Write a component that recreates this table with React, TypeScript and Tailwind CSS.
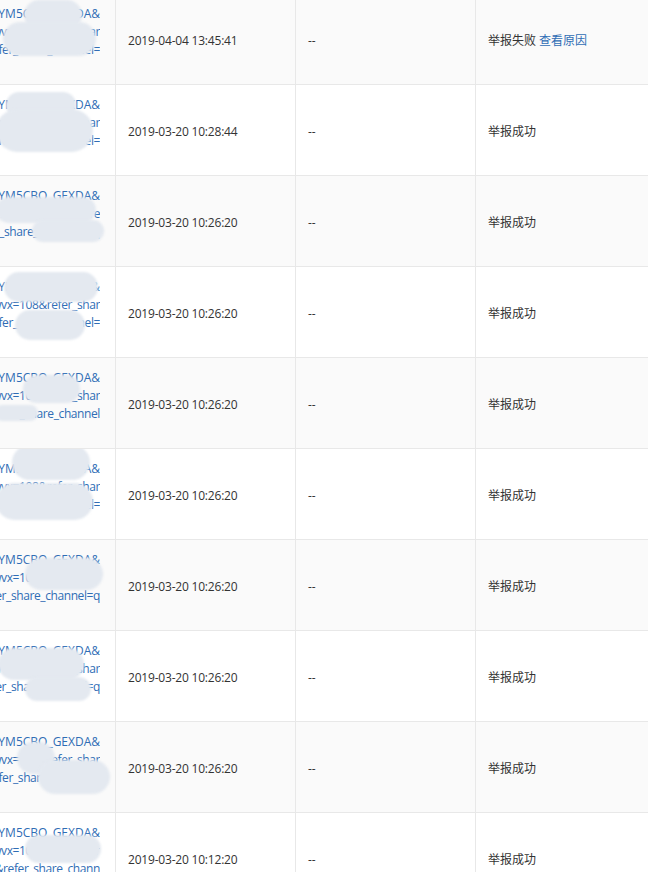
import React from 'react';

interface Blob {
  x: number;
  y: number;
  w: number;
  h: number;
}

interface Row {
  lines: string[];
  time: string;
  failed?: boolean;
  blobs: Blob[];
}

const rows: Row[] = [
  {
    lines: ['E1YM5CBO_GEXDA&', 'wvx=108&refer_shar', 'refer_share_channel='],
    time: '2019-04-04 13:45:41',
    failed: true,
    blobs: [
      { x: 24, y: 6, w: 58, h: 30 },
      { x: 3, y: 28, w: 93, h: 34 },
    ],
  },
  {
    lines: ['E1YM5CBO_GEXDA&', 'wvx=108&refer_shar', 'refer_share_channel='],
    time: '2019-03-20 10:28:44',
    blobs: [
      { x: 6, y: 7, w: 70, h: 26 },
      { x: -4, y: 24, w: 97, h: 43 },
    ],
  },
  {
    lines: ['E1YM5CBO_GEXDA&', 'wvx=108&refer_share', 'r_share_channel=qq'],
    time: '2019-03-20 10:26:20',
    blobs: [
      { x: -4, y: 21, w: 100, h: 26 },
      { x: 32, y: 44, w: 72, h: 22 },
    ],
  },
  {
    lines: ['E1YM5CBO_GEXDA&', 'wvx=108&refer_shar', 'refer_share_channel='],
    time: '2019-03-20 10:26:20',
    blobs: [
      { x: 4, y: 5, w: 94, h: 30 },
      { x: 15, y: 43, w: 70, h: 30 },
    ],
  },
  {
    lines: ['E1YM5CBO_GEXDA&', 'wvx=108&refer_shar', 'refer_share_channel'],
    time: '2019-03-20 10:26:20',
    blobs: [
      { x: 23, y: 17, w: 57, h: 28 },
      { x: -6, y: 47, w: 44, h: 16 },
    ],
  },
  {
    lines: ['E1YM5CBO_GEXDA&', 'wvx=108&refer_shar', 'refer_share_channel='],
    time: '2019-03-20 10:26:20',
    blobs: [
      { x: 12, y: -4, w: 78, h: 35 },
      { x: -4, y: 34, w: 97, h: 37 },
    ],
  },
  {
    lines: ['E1YM5CBO_GEXDA&', 'wvx=108&refer_shar', 'refer_share_channel=q'],
    time: '2019-03-20 10:26:20',
    blobs: [{ x: 25, y: 18, w: 78, h: 32 }],
  },
  {
    lines: ['E1YM5CBO_GEXDA&', 'wvx=108&refer_shar', 'refer_share_channel=q'],
    time: '2019-03-20 10:26:20',
    blobs: [
      { x: -2, y: 17, w: 86, h: 32 },
      { x: 25, y: 46, w: 66, h: 24 },
    ],
  },
  {
    lines: ['E1YM5CBO_GEXDA&', 'wvx=108&refer_shar', 'refer_share_channel='],
    time: '2019-03-20 10:26:20',
    blobs: [
      { x: 17, y: 20, w: 38, h: 32 },
      { x: 38, y: 38, w: 72, h: 34 },
    ],
  },
  {
    lines: ['E1YM5CBO_GEXDA&', 'wvx=108&refer_shar', '&refer_share_chann'],
    time: '2019-03-20 10:12:20',
    blobs: [{ x: 25, y: 22, w: 76, h: 28 }],
  },
];

export default function App() {
  return (
    <div
      className="w-[648px] h-[872px] overflow-hidden bg-white text-[12px] text-[#333]"
      style={{ fontFamily: '"Open Sans", "Noto Sans CJK SC", sans-serif' }}
    >
      <div className="-mt-[6px]">
        {rows.map((row, i) => (
          <div
            key={i}
            className={`flex h-[91px] border-b border-[#e8e8e8] ${i % 2 === 0 ? 'bg-[#fafafa]' : 'bg-white'}`}
          >
            {/* url cell, scrolled off to the left */}
            <div className="relative w-[116px] shrink-0 border-r border-[#e8e8e8] pr-[15px] pt-[4px] flex items-center overflow-hidden">
              <div className="w-full leading-[18px] text-[#2f6db5]">
                {row.lines.map((line, j) => (
                  <div key={j} className="flex justify-end overflow-hidden">
                    <span className={`shrink-0 whitespace-nowrap ${j === 0 ? 'tracking-normal' : 'tracking-[-0.4px]'}`}>
                      {line}
                    </span>
                  </div>
                ))}
                <div className="h-[18px]" />
              </div>
              {row.blobs.map((b, k) => (
                <div
                  key={k}
                  className="absolute rounded-full bg-[#e4e9f0] blur-[1px]"
                  style={{ left: b.x, top: b.y, width: b.w, height: b.h }}
                />
              ))}
            </div>

            <div className="w-[180px] shrink-0 border-r border-[#e8e8e8] pl-3 pt-[4px] flex items-center tracking-[-0.2px]">
              {row.time}
            </div>

            <div className="w-[180px] shrink-0 border-r border-[#e8e8e8] pl-3 pt-[4px] flex items-center">
              --
            </div>

            <div className="flex-1 pl-3 pt-[4px] flex items-center">
              {row.failed ? (
                <>
                  <span>举报失败</span>
                  <a className="ml-[3px] text-[#2f6db5] cursor-pointer">查看原因</a>
                </>
              ) : (
                <span>举报成功</span>
              )}
            </div>
          </div>
        ))}
      </div>
    </div>
  );
}
